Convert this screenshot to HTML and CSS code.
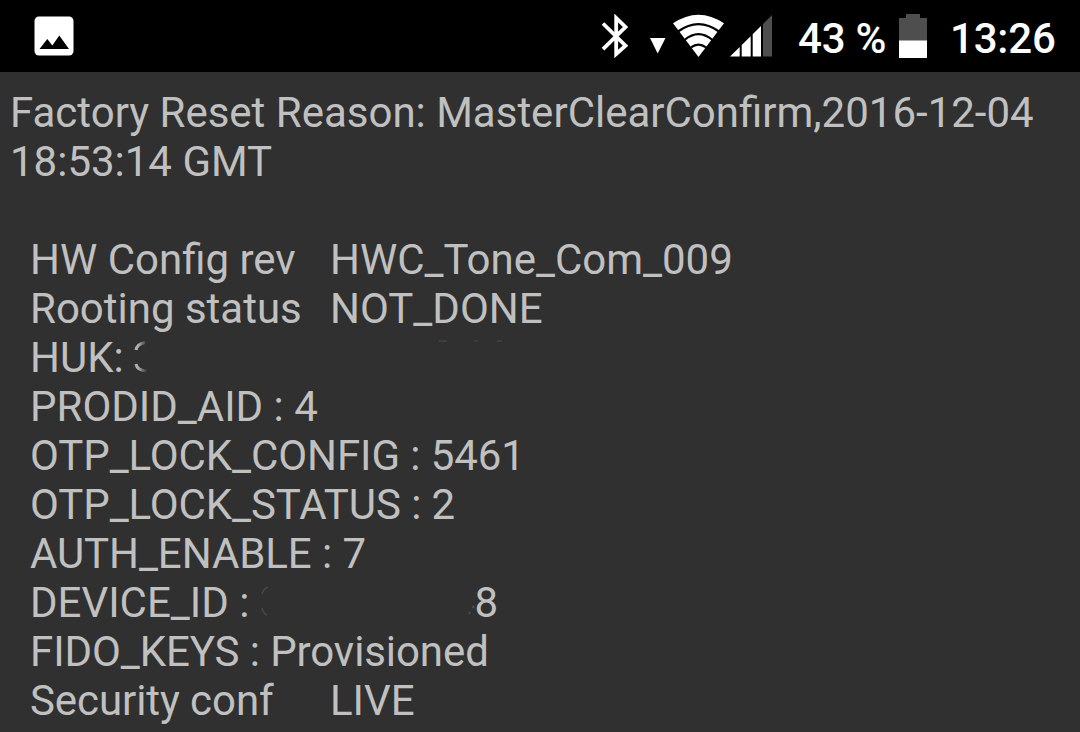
FILE: index.html
```html
<!DOCTYPE html>
<html lang="en">
<head>
    <meta charset="UTF-8">
    <meta name="viewport" content="width=device-width, initial-scale=1.0">
    <title>Service info</title>
    <link rel="stylesheet" href="styles.css">
</head>
<body>
<div class="status-bar">
    <svg class="icon-picture" width="40" height="40" viewBox="0 0 40 40">
        <rect x="0.5" y="0.5" width="39" height="39" rx="4.5" fill="#fff"/>
        <path d="M5.5 33L13.3 23L18.3 29.500L25.300 19.500L35 33z" fill="#000"/>
    </svg>
    <svg class="icon-bluetooth" width="28" height="44" viewBox="0 0 28 44">
        <path d="M2 9.5L24.5 31.7L15.2 40V4L24.5 13L2 35.200" fill="none" stroke="#fff" stroke-width="3.800"/>
    </svg>
    <svg class="icon-arrow" width="16" height="16" viewBox="0 0 16 16">
        <path d="M0 0H15.5L7.7 15.5z" fill="#fff"/>
    </svg>
    <svg class="icon-wifi" width="52" height="44" viewBox="0 0 52 44">
        <path d="M0 9.300Q25.500 -8 51 9.300L25.500 43z" fill="#fff"/>
        <path d="M5 17.500Q25.500 2.800 46 17.500M11.500 26Q25.500 14.400 39.500 26M18 33.300Q25.500 27.800 33 33.300" fill="none" stroke="#000" stroke-width="2.200"/>
    </svg>
    <svg class="icon-signal" width="42" height="42" viewBox="0 0 42 42">
        <path d="M0 41.500L9.700 32V41.500zM11.700 30L20.700 21.200V41.500H11.700zM22.700 19.200L31 11V41.500H22.700z" fill="#fff"/>
        <path d="M33 9L42 0V41.500H33z" fill="#4e4e4e"/>
    </svg>
    <span class="battery-level">43 %</span>
    <svg class="icon-battery" width="28" height="44" viewBox="0 0 28 44">
        <path d="M7 0H21V4H28V27H0V4H7z" fill="#4e4e4e"/>
        <rect y="26.500" width="28" height="17.500" fill="#fff"/>
    </svg>
    <span class="clock">13:26</span>
</div>
<div class="content">
    <p class="reason">Factory Reset Reason: MasterClearConfirm,2016-12-04 18:53:14 GMT</p>
    <div class="info">
        <div class="row"><span class="label">HW Config rev</span><span>HWC_Tone_Com_009</span></div>
        <div class="row"><span class="label">Rooting status</span><span>NOT_DONE</span></div>
        <div class="row">
            <span class="huk">HUK:</span>
            <!-- erased key, only the edges of the digits are left -->
            <svg class="erased-huk" width="380" height="49" viewBox="0 0 380 49">
                <defs>
                    <linearGradient id="fade" x1="0" x2="1">
                        <stop offset="0.2" stop-color="#b0b0b0"/>
                        <stop offset="1" stop-color="#303030"/>
                    </linearGradient>
                </defs>
                <path d="M2 17Q3 11 11 9.500M2 31Q3 37.500 13 38" fill="none" stroke="url(#fade)" stroke-width="3"/>
                <path d="M305 8H313M340 8H344M363 8H368" stroke="#3e3e3e" stroke-width="2"/>
            </svg>
        </div>
        <div class="row">PRODID_AID : 4</div>
        <div class="row tight">OTP_LOCK_CONFIG : 5461</div>
        <div class="row tight">OTP_LOCK_STATUS : 2</div>
        <div class="row tight">AUTH_ENABLE : 7</div>
        <div class="row">
            <span class="device">DEVICE_ID :</span>
            <svg class="erased-id" width="214" height="49" viewBox="0 0 214 49">
                <path d="M1 16Q2 11 7 9M1 30Q2 35 6 37" fill="none" stroke="#484848" stroke-width="1.500"/>
                <path d="M208 36L209 34M211.500 30L213 28" stroke="#505050" stroke-width="2"/>
            </svg>
            <span>8</span>
        </div>
        <div class="row tight">FIDO_KEYS : Provisioned</div>
        <div class="row"><span class="label tight">Security conf</span><span>LIVE</span></div>
    </div>
</div>
</body>
</html>
```
FILE: styles.css
```css
body {
    margin: 0;
    height: 732px;
    overflow: hidden;
    background-color: #303030;
    color: #c0c0c0;
    font-family: Roboto, sans-serif;
    font-size: 42px;
    line-height: 49px;
}

.status-bar {
    display: flex;
    align-items: flex-start;
    box-sizing: border-box;
    height: 72px;
    padding: 14px 0 0 34px;
    background-color: #000;
    color: #fff;
    font-weight: 500;
}

.status-bar svg {
    flex: none;
}

.status-bar .icon-picture {
    margin-top: 2px;
}

.icon-bluetooth {
    margin-left: 527px;
}

.icon-arrow {
    margin: 24px 0 0 21px;
}

.icon-wifi {
    margin-left: 7px;
}

.icon-signal {
    margin: 1px 0 0 5px;
}

.battery-level {
    width: 101px;
    margin-left: 26px;
    letter-spacing: -0.2px;
    white-space: nowrap;
}

.clock {
    margin-left: 23px;
    letter-spacing: -0.2px;
}

.content {
    padding: 16px 0 0 10px;
}

.reason {
    margin: 0 0 49px;
}

.info {
    padding-left: 20px;
}

.row {
    display: flex;
    height: 49px;
    white-space: pre;
}

.label {
    width: 300px;
}

.tight {
    letter-spacing: -0.08px;
}

.huk {
    width: 104px;
}

.device {
    width: 230.5px;
}
```
